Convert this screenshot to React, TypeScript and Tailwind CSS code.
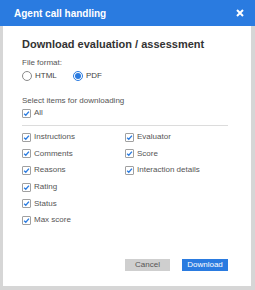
import React, { useState } from "react";

const Check = ({ label, h = "h-[16.6px]" }: { label: string; h?: string }) => (
  <label className={"flex items-center gap-[3px] " + h}>
    <span className="w-[9px] h-[9px] border border-[#a0a0a0] bg-white flex items-center justify-center rounded-[1px]">
      <svg width="7" height="7" viewBox="0 0 8 8">
        <path d="M1.3 4.2 L3.2 6 L6.8 1.8" stroke="#2a7be0" strokeWidth="1.5" fill="none" />
      </svg>
    </span>
    <span className="text-[8px] text-[#555] leading-[10px]">{label}</span>
  </label>
);

const Radio = ({ label, on, w }: { label: string; on?: boolean; w: string }) => (
  <label className={"flex items-center gap-[3px] " + w}>
    <span
      className={
        "w-[10px] h-[10px] rounded-full border flex items-center justify-center " +
        (on ? "border-[#2a7be0]" : "border-[#8a8a8a]")
      }
    >
      {on && <span className="w-[6px] h-[6px] rounded-full bg-[#2a7be0]" />}
    </span>
    <span className="text-[8px] text-[#444] leading-[10px]">{label}</span>
  </label>
);

export default function App() {
  const [format] = useState("pdf");

  return (
    <div
      className="w-[255px] h-[290px] bg-[#d6d6d6] pl-[3px] pr-[4px] pb-[4px] flex flex-col"
      style={{ fontFamily: '"Liberation Sans", Arial, sans-serif' }}
    >
      <div className="h-[26px] -ml-[3px] -mr-[4px] bg-[#2a7be0] flex items-center justify-between pl-[14px] pr-[11px]">
        <span className="text-white text-[10px] font-bold">Agent call handling</span>
        <svg width="8" height="8" viewBox="0 0 8 8">
          <path d="M1 1 L7 7 M7 1 L1 7" stroke="white" strokeWidth="2" />
        </svg>
      </div>
      <div className="flex-1 bg-white pl-[19px] pr-[23px] pt-[11px]">
        <h1 className="text-[11px] font-bold text-[#333] leading-[14px]">
          Download evaluation / assessment
        </h1>
        <div className="mt-[7px] text-[8px] leading-[10px] text-[#555]">File format:</div>
        <div className="flex mt-[3px]">
          <Radio label="HTML" on={format === "html"} w="w-[51px]" />
          <Radio label="PDF" on={format === "pdf"} w="w-[40px]" />
        </div>
        <div className="mt-[15px] text-[8px] leading-[10px] text-[#555]">Select items for downloading</div>
        <Check label="All" h="h-[14px]" />
        <div className="border-t border-[#dcdcdc] mt-[5px] pt-[3px] grid grid-cols-[103px_1fr]">
          <div className="flex flex-col">
            <Check label="Instructions" />
            <Check label="Comments" />
            <Check label="Reasons" />
            <Check label="Rating" />
            <Check label="Status" />
            <Check label="Max score" />
          </div>
          <div className="flex flex-col">
            <Check label="Evaluator" />
            <Check label="Score" />
            <Check label="Interaction details" />
          </div>
        </div>
        <div className="flex justify-end gap-[12px] mt-[30px]">
          <button className="w-[45px] h-[12px] bg-[#cfcfcf] text-[8px] text-[#555] leading-none">Cancel</button>
          <button className="w-[46px] h-[12px] bg-[#2a7be0] text-[8px] text-white leading-none">Download</button>
        </div>
      </div>
    </div>
  );
}
